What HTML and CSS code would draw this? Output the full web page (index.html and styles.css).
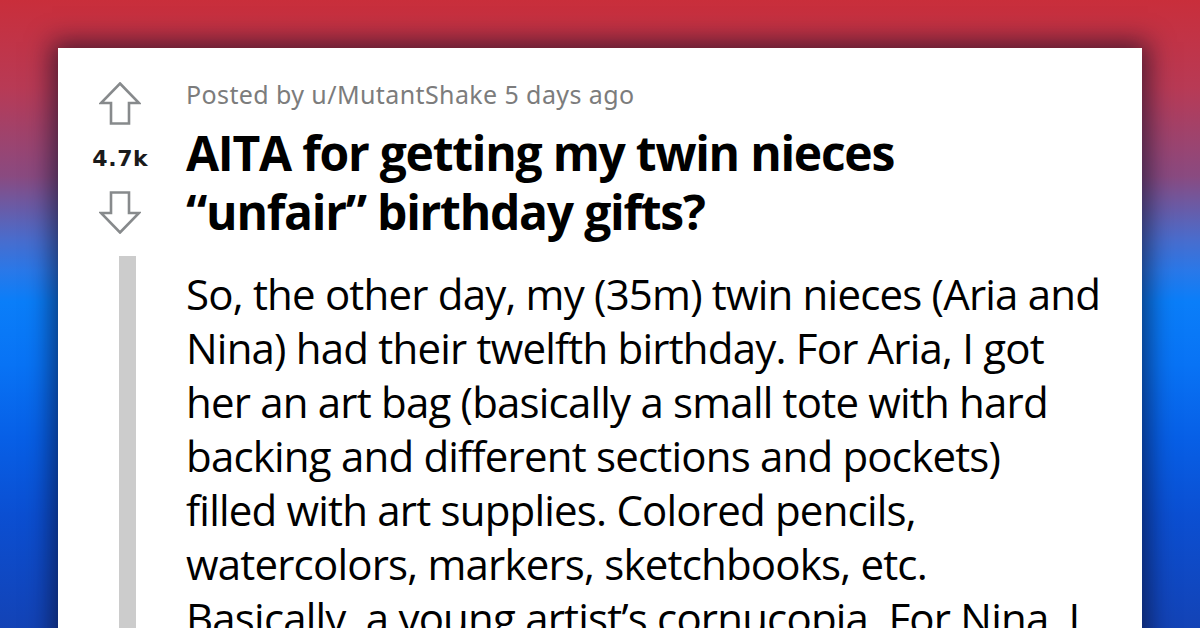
FILE: index.html
```html
<!DOCTYPE html>
<html>
<head>
<meta charset="utf-8">
<link rel="stylesheet" href="styles.css">
</head>
<body>
<div class="stage">
  <div class="card">
    <div class="votes">
      <svg class="arrow" width="42" height="43" viewBox="0 0 42 43">
        <path d="M21 1.5 L40 21 L30 21 L30 41.5 L12 41.5 L12 21 L2 21 Z" fill="none" stroke="#878a8c" stroke-width="2.6" stroke-linejoin="miter"/>
      </svg>
      <div class="count">4.7k</div>
      <svg class="arrow" width="42" height="43" viewBox="0 0 42 43">
        <path d="M21 41.5 L40 22 L30 22 L30 1.5 L12 1.5 L12 22 L2 22 Z" fill="none" stroke="#878a8c" stroke-width="2.6" stroke-linejoin="miter"/>
      </svg>
      <div class="thread-line"></div>
    </div>
    <div class="content">
      <div class="meta">Posted by u/MutantShake 5 days ago</div>
      <h1 class="title">AITA for getting my twin nieces<br>“unfair” birthday gifts?</h1>
      <p class="body">So, the other day, my (35m) twin nieces (Aria and<br>Nina) had their twelfth birthday. For Aria, I got<br>her an art bag (basically a small tote with hard<br>backing and different sections and pockets)<br>filled with art supplies. Colored pencils,<br>watercolors, markers, sketchbooks, etc.<br>Basically, a young artist’s cornucopia. For Nina, I</p>
    </div>
  </div>
</div>
</body>
</html>
```
FILE: styles.css
```css
html, body {
  margin: 0;
  padding: 0;
  width: 1200px;
  height: 628px;
  overflow: hidden;
}
.stage {
  width: 1200px;
  height: 628px;
  box-sizing: border-box;
  padding: 48px 58px 0;
  background: linear-gradient(180deg,
    #c92e3b 0%,
    #b83a55 14%,
    #8a4a80 28%,
    #4a6ccc 38%,
    #2a78e8 43%,
    #0a7ef9 48%,
    #0873f5 58%,
    #075fe6 70%,
    #0b4fd2 82%,
    #1343b6 100%);
  overflow: hidden;
}
.card {
  background: #fff;
  height: 620px;
  display: flex;
  box-shadow: 0 0 24px 6px rgba(10, 10, 30, 0.62);
}
.votes {
  width: 124px;
  flex: none;
  display: flex;
  flex-direction: column;
  align-items: center;
  padding-top: 34px;
}
.arrow {
  display: block;
}
.count {
  font-family: "DejaVu Sans", sans-serif;
  font-weight: 700;
  font-size: 22px;
  line-height: 26px;
  color: #1a1a1b;
  margin: 21px 0 19px;
  letter-spacing: 0.6px;
  padding-left: 0.6px;
}
.thread-line {
  width: 17px;
  background: #cccccc;
  flex: 1;
  margin-top: 22px;
  margin-left: 15px;
}
.content {
  margin-left: 4px;
  padding-top: 30px;
  flex: 1;
  min-width: 0;
}
.meta {
  font-family: "Noto Sans", sans-serif;
  font-size: 25px;
  line-height: 32px;
  color: #7c7c7c;
  letter-spacing: 0.4px;
}
.title {
  font-family: "Open Sans", sans-serif;
  font-weight: 700;
  font-size: 48px;
  line-height: 59px;
  color: #000;
  margin: 13px 0 0;
  letter-spacing: -1.25px;
  white-space: nowrap;
}
.body {
  font-family: "Open Sans", sans-serif;
  font-size: 42px;
  line-height: 54px;
  color: #000;
  margin: 26px 0 0;
  letter-spacing: -0.8px;
  white-space: nowrap;
}
```
